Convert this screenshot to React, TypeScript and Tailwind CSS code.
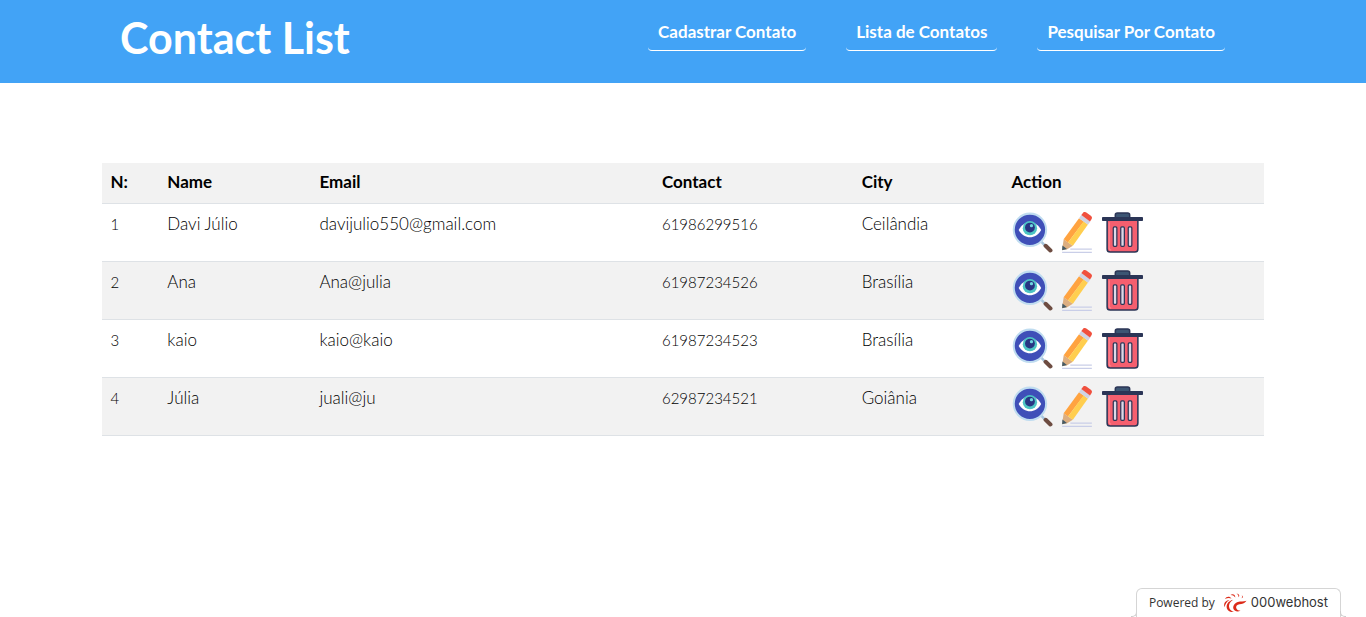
import type { ReactNode } from "react";

type Contact = { id: number; name: string; email: string; phone: string; city: string };

const contacts: Contact[] = [
  { id: 1, name: "Davi Júlio", email: "davijulio550@gmail.com", phone: "61986299516", city: "Ceilândia" },
  { id: 2, name: "Ana", email: "Ana@julia", phone: "61987234526", city: "Brasília" },
  { id: 3, name: "kaio", email: "kaio@kaio", phone: "61987234523", city: "Brasília" },
  { id: 4, name: "Júlia", email: "juali@ju", phone: "62987234521", city: "Goiânia" },
];

function ViewIcon() {
  return (
    <svg viewBox="0 0 40 40" className="size-[41px]" aria-hidden="true">
      <path d="M28 28.500 32 32.500" stroke="#a9c6dc" strokeWidth="2.500" />
      <path d="m32.800 33 4.700 4.500" stroke="#6d4c41" strokeWidth="4" strokeLinecap="round" />
      <circle cx="17.500" cy="17.400" r="15.800" fill="#3f4fb8" stroke="#bfdcf0" strokeWidth="2" />
      <path d="M6.500 17.500c5.500-10 16.500-10 22 0-5.500 9.500-16.500 9.500-22 0Z" fill="#fff" />
      <circle cx="17.500" cy="15.800" r="7" fill="#4dc4c4" />
      <circle cx="17.500" cy="15.200" r="4.800" fill="#283583" />
      <circle cx="19" cy="13.300" r="1.600" fill="#6fd6e0" />
    </svg>
  );
}

function EditIcon() {
  return (
    <svg viewBox="0 0 40 40" className="size-[41px]" aria-hidden="true">
      <path d="M13 36.200h21M5 39.500h29" stroke="#c9cee8" strokeWidth="1.200" />
      <path d="m6.500 26.500 9 6.500-6 3.500-4.500.5Z" fill="#dcae80" />
      <path d="m5.300 32.800 4.400 3.300L5 37.300Z" fill="#455a64" />
      <path d="m6.500 26.500 15-20.500 4.700 3.300-15.400 20.400Z" fill="#ffa340" />
      <path d="M10.800 29.700 26 9l4.200 3.200L15.500 33Z" fill="#ffce4f" />
      <path d="m21.500 6 2.200-3 8.800 6.200-2.300 3.200Z" fill="#cfd3e4" />
      <path d="m23.700 3 1.400-1.900a2.500 2.500 0 0 1 3.500-.5L33 3.700a2.500 2.500 0 0 1 .5 3.500l-1.300 2Z" fill="#f0503e" />
    </svg>
  );
}

function DeleteIcon() {
  return (
    <svg viewBox="0 0 40 40" className="size-[41px]" aria-hidden="true">
      <path d="M5 8h30v28a3 3 0 0 1-3 3H8a3 3 0 0 1-3-3Z" fill="#f55f6f" stroke="#2b3556" strokeWidth="1.500" />
      <path d="M7 10v25a2 2 0 0 0 2 2" fill="none" stroke="#ff8791" strokeWidth="1" />
      <path d="M13 5V3a2 2 0 0 1 2-2h10a2 2 0 0 1 2 2v2" fill="#3c5573" stroke="#2b3556" strokeWidth="1.500" />
      <rect x="0" y="4.800" width="40" height="4" rx=".8" fill="#2b3556" />
      <g fill="#ded9e8" stroke="#2b3556" strokeWidth="1.200">
        <rect x="11" y="14.500" width="3.500" height="19" rx="1" />
        <rect x="18.300" y="14.500" width="3.500" height="19" rx="1" />
        <rect x="25.600" y="14.500" width="3.500" height="19" rx="1" />
      </g>
    </svg>
  );
}

function HostLogo() {
  return (
    <svg viewBox="0 0 24 20" className="h-5 w-6" aria-hidden="true">
      <g fill="#dc2a18">
        <path d="M23.500 7.800c-2 3-4.500 3.200-7 3.500-2.500.4-3.700 2-3.300 3.600.4 1.700 2 2.600 4.300 2.600-2.300 1.600-6 1-7-1.500-1-2.800.8-6 4.300-7.100 3-.9 5.700.1 8.700-1.100Z" />
        <path d="M10 6.800c-3.500 2.400-4.800 5.600-3.600 8.400.8 1.900 2.400 3 4.600 3.400-3.300.9-6-.3-7-2.900C2.700 12 5.200 8 10 6.800Z" />
        <path d="M6.500 7C3.800 8.600 2.200 11 1.600 14.200.2 10.300 2.400 7.300 6.500 7Z" />
        <path d="M8.500 5.400C6.200 4.500 4 4.800 2 6 3.400 3.200 6.600 2.900 8.500 5.400Z" />
        <path d="M12.300 4.500C11 2.500 9.300 1.800 7.500 1.900c2.300-1.500 5-.2 4.800 2.600Z" />
        <path d="M15.500 4.300c.2-1.800-.6-2.800-2-3.500 2.500 0 3.700 1.900 2 3.500Z" />
        <path d="M18.500 5.200c.8-1 .8-2 .2-3 1.600.9 1.600 2.500-.2 3Z" />
      </g>
    </svg>
  );
}

function NavLink({ children }: { children: ReactNode }) {
  return (
    <a href="#" className="rounded-[4px] border-b border-white px-2.5 pt-1 pb-1.5 text-[17px] leading-6 font-bold whitespace-nowrap text-white">
      {children}
    </a>
  );
}

export default function App() {
  return (
    <div className="flex min-h-screen flex-col bg-white font-[Lato,sans-serif] text-black">
      <header className="flex min-h-[83px] justify-between bg-[#42a3f6] pr-[141px] pl-[120px]">
        <h1 className="pt-3 text-[43px] leading-[52px] font-bold whitespace-nowrap text-white">Contact List</h1>
        <nav className="flex items-start gap-10 pt-4">
          <NavLink>Cadastrar Contato</NavLink>
          <NavLink>Lista de Contatos</NavLink>
          <NavLink>Pesquisar Por Contato</NavLink>
        </nav>
      </header>

      <main className="mx-auto w-[85%] flex-1 pt-20">
        <table className="w-full table-fixed border-collapse text-left text-[17px] leading-6">
          <colgroup>
            <col className="w-[4.9%]" />
            <col className="w-[13.1%]" />
            <col className="w-[29.5%]" />
            <col className="w-[17.2%]" />
            <col className="w-[12.9%]" />
            <col />
          </colgroup>
          <thead>
            <tr className="border-b border-[#dee2e6] bg-[#f2f2f2]">
              {["N:", "Name", "Email", "Contact", "City", "Action"].map((label) => (
                <th key={label} scope="col" className="px-2 pt-[7px] pb-[9px] font-bold">
                  {label}
                </th>
              ))}
            </tr>
          </thead>
          <tbody className="font-light">
            {contacts.map((c) => (
              <tr key={c.id} className="border-b border-[#dee2e6] align-top even:bg-[#f2f2f2]">
                <td className="px-2 pt-2 text-[15px]">{c.id}</td>
                <td className="px-2 pt-2">{c.name}</td>
                <td className="px-2 pt-2">{c.email}</td>
                <td className="px-2 pt-2 text-[15px]">{c.phone}</td>
                <td className="px-2 pt-2">{c.city}</td>
                <td className="py-2 pl-[9px]">
                  <div className="flex gap-1">
                    <a href="#" className="h-[41px]" aria-label={`View ${c.name}`}><ViewIcon /></a>
                    <a href="#" className="h-[41px]" aria-label={`Edit ${c.name}`}><EditIcon /></a>
                    <a href="#" className="h-[41px]" aria-label={`Delete ${c.name}`}><DeleteIcon /></a>
                  </div>
                </td>
              </tr>
            ))}
          </tbody>
        </table>
      </main>

      <footer className="flex items-end justify-end pr-5">
        <span className="size-[6px] rounded-br-[5px] border-r border-b border-[#cccccc]" />
        <a href="#" className="-mx-px flex h-[29px] items-center gap-2 rounded-t-md border-x border-t border-[#d5d5d5] bg-white px-3 font-['Open_Sans',sans-serif] text-[12px] text-[#333333]">
          Powered by
          <span className="flex items-center gap-1 font-[Inter,sans-serif] text-[13px]">
            <HostLogo />
            000webhost
          </span>
        </a>
        <span className="size-[6px] rounded-bl-[5px] border-b border-l border-[#cccccc]" />
      </footer>
    </div>
  );
}
